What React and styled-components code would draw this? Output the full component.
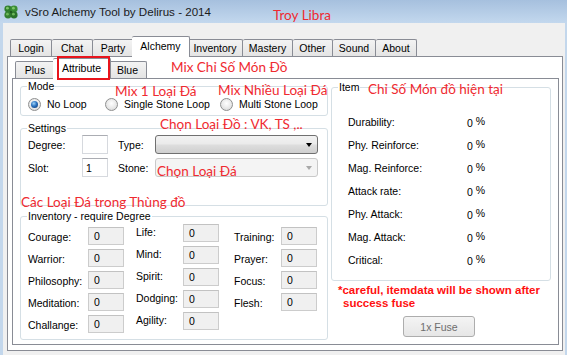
import React from 'react';
import styled, { createGlobalStyle } from 'styled-components';

const GlobalStyle = createGlobalStyle`
  html, body {
    margin: 0;
    padding: 0;
  }
  body {
    background: #f0f0f0;
    font-family: "Liberation Sans", Arial, sans-serif;
  }
`;

const Window = styled.div`
  position: relative;
  width: 567px;
  height: 355px;
  overflow: hidden;
  background: #f0f0f0;
  display: flex;
  flex-direction: column;
`;

const TitleBar = styled.div`
  flex: none;
  height: 23px;
  display: flex;
  align-items: center;
  gap: 6px;
  padding-left: 3px;
  background: linear-gradient(#a6c0de, #c3d8ee);
`;

const TitleText = styled.span`
  font-size: 11.6px;
  color: #1b1b1b;
`;

const Body = styled.div`
  flex: 1;
  display: flex;
  flex-direction: column;
  border-left: 3px solid #c3d7ec;
  border-right: 2px solid #c3d7ec;
  padding: 13px 2px 4px 4px;
`;

const TabStrip = styled.div`
  display: flex;
  align-items: flex-end;
  height: ${({ $h }) => $h}px;
  padding-left: ${({ $pad }) => $pad}px;
`;

const Tab = styled.div`
  position: relative;
  box-sizing: border-box;
  width: ${({ $w, $active }) => ($active ? $w + 4 : $w)}px;
  height: ${({ $active, $h }) => ($active ? $h + 4 : $h)}px;
  margin: 0 ${({ $active }) => ($active ? '-2px -1px' : '0 0')};
  border: 1px solid #898c95;
  border-bottom: none;
  border-radius: 2px 2px 0 0;
  background: ${({ $active }) => ($active ? '#ffffff' : 'linear-gradient(#f3f3f3, #e4e4e4)')};
  z-index: ${({ $active }) => ($active ? 2 : 1)};
  display: flex;
  align-items: center;
  justify-content: center;
  padding-bottom: ${({ $active }) => ($active ? 2 : 0)}px;
  font-size: 10.5px;
  color: #000;

  & + & {
    border-left: ${({ $active }) => ($active ? '1px solid #898c95' : 'none')};
  }

  &::after {
    content: '';
    display: ${({ $marked }) => ($marked ? 'block' : 'none')};
    position: absolute;
    left: 4px;
    right: 0;
    top: -3px;
    bottom: -1px;
    border: 2px solid #e8141c;
  }
`;

const Panel = styled.div`
  flex: 1;
  display: flex;
  flex-direction: column;
  border: 1px solid #898c95;
  background: #fff;
  padding: ${({ $pad }) => $pad};
`;

const Content = styled.div`
  flex: 1;
  display: flex;
  gap: 3px;
  padding: 1px 7px 0 7px;
`;

const LeftCol = styled.div`
  width: 308px;
  display: flex;
  flex-direction: column;
  gap: ${({ $gap }) => $gap}px;
`;

const RightCol = styled.div`
  width: 220px;
  display: flex;
  flex-direction: column;
  padding-top: 1px;
`;

const Group = styled.fieldset`
  box-sizing: border-box;
  margin: 0 0 ${({ $mb }) => $mb || 0}px 0;
  min-width: 0;
  height: ${({ $h }) => $h}px;
  padding: ${({ $pt }) => $pt}px 7px 0 7px;
  border: 1px solid #d5dfe5;
  border-radius: 3px;
`;

const Legend = styled.legend`
  padding: 0 1px;
  margin-left: -1px;
  font-size: 10.5px;
  line-height: 12px;
  color: #000;
`;

const RadioRow = styled.div`
  display: grid;
  grid-template-columns: 77px 115px auto;
  height: 16px;
  align-items: center;
`;

const RadioItem = styled.label`
  display: flex;
  align-items: center;
  gap: 6px;
  font-size: 10.5px;
  line-height: 12px;
  color: #000;
`;

const RadioDot = styled.span`
  box-sizing: border-box;
  width: 13px;
  height: 13px;
  border-radius: 50%;
  border: 1px solid #8e8f8f;
  background: radial-gradient(circle at 50% 40%, #ffffff 0%, #e6e6e6 60%, #cfcfcf 100%);
  display: flex;
  align-items: center;
  justify-content: center;

  &::after {
    content: '';
    width: 7px;
    height: 7px;
    border-radius: 50%;
    background: ${({ $on }) =>
      $on ? 'radial-gradient(circle at 40% 35%, #9fd3f7 0%, #2a72c0 45%, #0c2f63 100%)' : 'transparent'};
  }
`;

const SettingsGrid = styled.div`
  display: grid;
  grid-template-columns: 54px 26px 10px 37px 163px;
  grid-auto-rows: 19px;
  row-gap: 4px;
  align-items: center;
  font-size: 10.5px;
  color: #000;
`;

const Gap = styled.span``;

const TextBox = styled.div`
  box-sizing: border-box;
  height: ${({ $h }) => $h || 19}px;
  border: 1px solid ${({ $ro }) => ($ro ? '#cccccc' : '#d6d9de')};
  border-top-color: ${({ $ro }) => ($ro ? '#c2c2c2' : '#abadb3')};
  background: ${({ $ro }) => ($ro ? '#f0f0f0' : '#ffffff')};
  display: flex;
  align-items: center;
  padding-left: ${({ $ro }) => ($ro ? 5 : 3)}px;
  font-size: 10.5px;
  color: #000;
`;

const Combo = styled.div`
  box-sizing: border-box;
  height: 19px;
  border: 1px solid ${({ $disabled }) => ($disabled ? '#c9c9c9' : '#707070')};
  border-radius: 3px;
  background: ${({ $disabled }) =>
    $disabled ? '#f4f4f4' : 'linear-gradient(#f2f2f2 0%, #ebebeb 45%, #dddddd 55%, #cfcfcf 100%)'};
  display: flex;
  align-items: center;
  justify-content: flex-end;
  padding-right: 5px;
`;

const Caret = styled.span`
  width: 0;
  height: 0;
  border-left: 3.5px solid transparent;
  border-right: 3.5px solid transparent;
  border-top: 4px solid ${({ $disabled }) => ($disabled ? '#a8a8a8' : '#000')};
`;

const InvColumns = styled.div`
  display: flex;
  gap: 12px;
`;

const InvCol = styled.div`
  display: flex;
  flex-direction: column;
  gap: 4px;
  margin-top: ${({ $lift }) => -$lift}px;
  margin-left: ${({ $ml }) => $ml || 0}px;
`;

const InvRow = styled.div`
  display: grid;
  grid-template-columns: ${({ $lw }) => $lw}px 36px;
  height: 18px;
  align-items: ${({ $top }) => ($top ? 'start' : 'center')};
  font-size: 10.5px;
  color: #000;
`;

const InvLabel = styled.span`
  padding-top: 2px;
`;

const StatList = styled.div`
  display: flex;
  flex-direction: column;
  padding-left: 9px;
`;

const StatRow = styled.div`
  display: grid;
  grid-template-columns: 119px auto;
  height: 23px;
  align-items: center;
  font-size: 10.5px;
  color: #000;
`;

const Pct = styled.span`
  vertical-align: 2px;
`;

const Note = styled.div`
  margin: 3px 0 0 7px;
  font-size: 11.5px;
  font-weight: 700;
  line-height: 13px;
  color: #ff1010;
  white-space: nowrap;
`;

const NoteLine = styled.div`
  padding-left: ${({ $indent }) => $indent || 0}px;
`;

const FuseButton = styled.div`
  align-self: center;
  margin: 6px 4px 0 0;
  box-sizing: border-box;
  width: 72px;
  height: 21px;
  border: 1px solid #adadad;
  border-radius: 3px;
  background: linear-gradient(#f4f4f4, #e6e6e6);
  display: flex;
  align-items: center;
  justify-content: center;
  font-size: 10.5px;
  color: #6d6d6d;
`;

const Annotation = styled.span`
  position: absolute;
  left: ${({ $x }) => $x}px;
  top: ${({ $y }) => $y}px;
  font-family: Lato, "Noto Sans", sans-serif;
  font-size: 13.5px;
  line-height: 12px;
  color: #ef2a30;
  white-space: nowrap;
  z-index: 5;
`;

const Clover = () => (
  <svg width="16" height="16" viewBox="0 0 16 16">
    <g>
      <ellipse cx="5" cy="5" rx="3.6" ry="3.4" fill="#2f7d2c" />
      <ellipse cx="11" cy="5" rx="3.6" ry="3.4" fill="#3a8c34" />
      <ellipse cx="5" cy="11" rx="3.6" ry="3.4" fill="#357f30" />
      <ellipse cx="11" cy="11" rx="3.6" ry="3.4" fill="#2b7229" />
      <circle cx="4.4" cy="4.2" r="1.4" fill="#7cc56a" />
      <circle cx="10.4" cy="4.2" r="1.4" fill="#7cc56a" />
      <circle cx="4.4" cy="10.2" r="1.4" fill="#6db85b" />
      <circle cx="10.4" cy="10.2" r="1.4" fill="#6db85b" />
      <circle cx="8" cy="8" r="1.2" fill="#1f5a1d" />
    </g>
  </svg>
);

const mainTabs = [
  ['Login', 42], ['Chat', 41], ['Party', 41], ['Alchemy', 54], ['Inventory', 55],
  ['Mastery', 50], ['Other', 40], ['Sound', 43], ['About', 41],
];

const subTabs = [['Plus', 40], ['Attribute', 54], ['Blue', 38]];

const invColumns = [
  { lw: 60, lift: 0, rows: ['Courage:', 'Warrior:', 'Philosophy:', 'Meditation:', 'Challange:'] },
  { lw: 47, lift: 3, rows: ['Life:', 'Mind:', 'Spirit:', 'Dodging:', 'Agility:'] },
  { lw: 47, lift: 0, ml: 3, rows: ['Training:', 'Prayer:', 'Focus:', 'Flesh:'] },
];

const stats = [
  'Durability:', 'Phy. Reinforce:', 'Mag. Reinforce:', 'Attack rate:',
  'Phy. Attack:', 'Mag. Attack:', 'Critical:',
];

const notes = [
  ['Troy Libra', 273, 9],
  ['Mix Chỉ Số Món Đồ', 171, 61],
  ['Mix 1 Loại Đá', 115, 85],
  ['Mix Nhiều Loại Đá', 218, 84],
  ['Chọn Loại Đồ : VK, TS ,..', 160, 118],
  ['Chọn Loại Đá', 157, 165],
  ['Các Loại Đá trong Thùng đồ', 21, 196],
  ['Chỉ Số Món đồ hiện tại', 368, 83],
];

export default function App() {
  return (
    <Window>
      <GlobalStyle />
      <TitleBar>
        <Clover />
        <TitleText>vSro Alchemy Tool by Delirus - 2014</TitleText>
      </TitleBar>
      <Body>
        <TabStrip $h={20} $pad={3}>
          {mainTabs.map(([name, w]) => (
            <Tab key={name} $w={w} $h={17} $active={name === 'Alchemy'}>{name}</Tab>
          ))}
        </TabStrip>
        <Panel $pad="1px 3px 5px 4px">
          <TabStrip $h={20} $pad={3}>
            {subTabs.map(([name, w]) => (
              <Tab key={name} $w={w} $h={17} $active={name === 'Attribute'} $marked={name === 'Attribute'}>
                {name}
              </Tab>
            ))}
          </TabStrip>
          <Panel $pad="0">
            <Content>
              <LeftCol $gap={6}>
                <Group $h={36} $pt={4}>
                  <Legend>Mode</Legend>
                  <RadioRow>
                    <RadioItem><RadioDot $on />No Loop</RadioItem>
                    <RadioItem><RadioDot />Single Stone Loop</RadioItem>
                    <RadioItem><RadioDot />Multi Stone Loop</RadioItem>
                  </RadioRow>
                </Group>
                <Group $h={84} $pt={1} $mb={-2}>
                  <Legend>Settings</Legend>
                  <SettingsGrid>
                    <span>Degree:</span>
                    <TextBox />
                    <Gap />
                    <span>Type:</span>
                    <Combo><Caret /></Combo>
                    <span>Slot:</span>
                    <TextBox>1</TextBox>
                    <Gap />
                    <span>Stone:</span>
                    <Combo $disabled><Caret $disabled /></Combo>
                  </SettingsGrid>
                </Group>
                <Group $h={130} $pt={5}>
                  <Legend>Inventory - require Degree</Legend>
                  <InvColumns>
                    {invColumns.map((col, ci) => (
                      <InvCol key={ci} $lift={col.lift} $ml={col.ml}>
                        {col.rows.map((label) => (
                          <InvRow key={label} $lw={col.lw} $top={col.lift > 0}>
                            <InvLabel>{label}</InvLabel>
                            <TextBox $ro $h={18}>0</TextBox>
                          </InvRow>
                        ))}
                      </InvCol>
                    ))}
                  </InvColumns>
                </Group>
              </LeftCol>
              <RightCol>
                <Group $h={200} $pt={17}>
                  <Legend>Item</Legend>
                  <StatList>
                    {stats.map((s) => (
                      <StatRow key={s}>
                        <span>{s}</span>
                        <span>0 <Pct>%</Pct></span>
                      </StatRow>
                    ))}
                  </StatList>
                </Group>
                <Note>
                  <NoteLine>*careful, itemdata will be shown after</NoteLine>
                  <NoteLine $indent={5}>success fuse</NoteLine>
                </Note>
                <FuseButton>1x Fuse</FuseButton>
              </RightCol>
            </Content>
          </Panel>
        </Panel>
      </Body>
      {notes.map(([text, x, y]) => (
        <Annotation key={text} $x={x} $y={y}>{text}</Annotation>
      ))}
    </Window>
  );
}
